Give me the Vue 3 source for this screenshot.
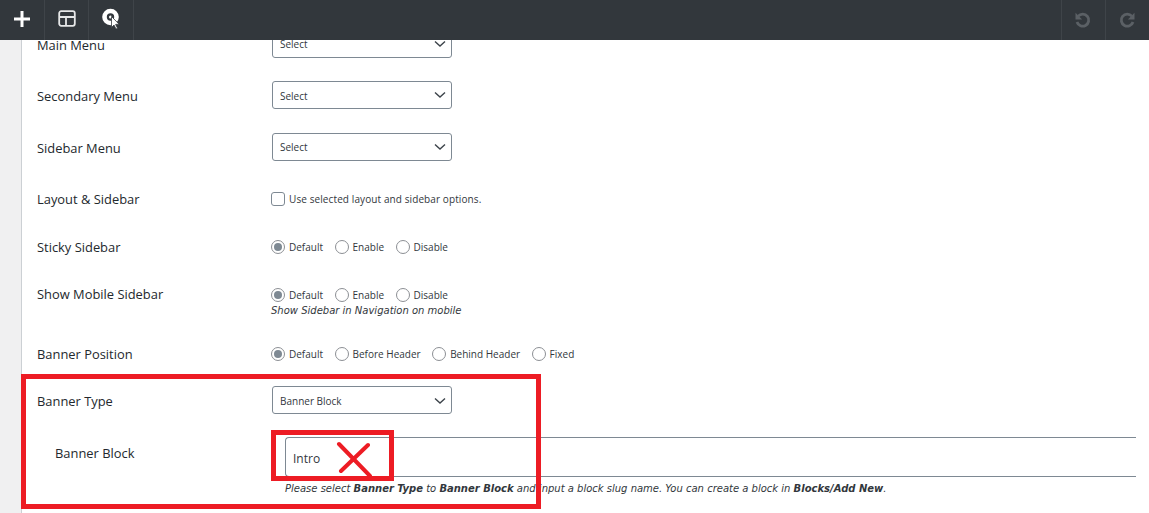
<script setup>
const radios = [
  ['Default', true], ['Enable', false], ['Disable', false]
]
const positions = [
  ['Default', true], ['Before Header', false], ['Behind Header', false], ['Fixed', false]
]
const selects = [
  { label: 'Main Menu', value: 'Select' },
  { label: 'Secondary Menu', value: 'Select' },
  { label: 'Sidebar Menu', value: 'Select' }
]
</script>

<template>
  <div class="page">
    <header class="bar">
      <div class="tools">
        <button class="tool first">
          <svg width="18" height="18" viewBox="0 0 18 18"><path d="M9 1v16M1 9h16" stroke="#fff" stroke-width="3" fill="none"/></svg>
        </button>
        <button class="tool">
          <svg width="20" height="20" viewBox="0 0 20 20"><rect x="2.2" y="2.2" width="15.6" height="14.6" rx="2" stroke="#e6e7e8" stroke-width="1.8" fill="none"/><path d="M2.500 8h15M9 8v8.500" stroke="#e6e7e8" stroke-width="1.800" fill="none"/></svg>
        </button>
        <button class="tool">
          <svg width="20" height="22" viewBox="0 0 20 22"><circle cx="9.500" cy="9" r="6" stroke="#fff" stroke-width="4.600" fill="none"/><circle cx="9.500" cy="9" r="1.500" fill="#fff"/><path d="M10.500 8.500l0 11 2.500-2.400 2 4 1.600-.8-2-3.900 3.500-.2z" fill="#fff" stroke="#32373c" stroke-width=".8"/></svg>
        </button>
      </div>
      <div class="tools right">
        <button class="tool side">
          <svg class="undo" width="18" height="18" viewBox="0 0 18 18"><path d="M5.200 5.200A6 6 0 1 1 4 11" stroke="#5b6065" stroke-width="2.800" fill="none"/><path d="M2.500 1.800v6.600h6.600z" fill="#5b6065"/></svg>
        </button>
        <button class="tool side">
          <svg width="18" height="18" viewBox="0 0 18 18"><path d="M12.800 5.200A6 6 0 1 0 14 11" stroke="#5b6065" stroke-width="2.800" fill="none"/><path d="M15.500 1.800v6.600H8.900z" fill="#5b6065"/></svg>
        </button>
      </div>
    </header>

    <main class="content">
      <form class="form">
        <div v-for="s in selects" :key="s.label" class="row tall">
          <label class="label">{{ s.label }}</label>
          <div class="select raised">
            <span>{{ s.value }}</span>
            <svg class="chev" width="12" height="8" viewBox="0 0 12 8"><path d="M1 1.500l5 4.500 5-4.500" stroke="#3c434a" stroke-width="1.400" fill="none"/></svg>
          </div>
        </div>

        <div class="row tall">
          <label class="label">Layout &amp; Sidebar</label>
          <div class="opts">
            <span class="check"></span>
            <span class="opt-text wide">Use selected layout and sidebar options.</span>
          </div>
        </div>

        <div class="row sticky">
          <label class="label">Sticky Sidebar</label>
          <div class="opts">
            <template v-for="r in radios" :key="r[0]">
              <span class="radio" :class="{ on: r[1] }"></span>
              <span class="opt-text spaced">{{ r[0] }}</span>
            </template>
          </div>
        </div>

        <div class="row mobile">
          <label class="label">Show Mobile Sidebar</label>
          <div class="stack">
            <div class="opts">
              <template v-for="r in radios" :key="r[0]">
                <span class="radio" :class="{ on: r[1] }"></span>
                <span class="opt-text spaced">{{ r[0] }}</span>
              </template>
            </div>
            <p class="hint mobile-hint">Show Sidebar in Navigation on mobile</p>
          </div>
        </div>

        <div class="row position">
          <label class="label">Banner Position</label>
          <div class="opts">
            <template v-for="r in positions" :key="r[0]">
              <span class="radio" :class="{ on: r[1] }"></span>
              <span class="opt-text spaced">{{ r[0] }}</span>
            </template>
          </div>
        </div>

        <div class="row type">
          <label class="label">Banner Type</label>
          <div class="select low-text">
            <span>Banner Block</span>
            <svg class="chev" width="12" height="8" viewBox="0 0 12 8"><path d="M1 1.500l5 4.500 5-4.500" stroke="#3c434a" stroke-width="1.400" fill="none"/></svg>
          </div>
        </div>

        <div class="block">
          <label class="label block-label">Banner Block</label>
          <div class="block-field">
            <div class="input">Intro</div>
            <p class="hint block-hint">Please select <b>Banner Type</b> to <b>Banner Block</b> and input a block slug name. You can create a block in <b>Blocks/Add New</b>.</p>
          </div>
        </div>
      </form>

      <div class="mark frame"></div>
      <div class="mark small-frame"></div>
      <svg class="mark cross" width="40" height="36" viewBox="0 0 40 36"><path d="M4 4l31 32M33 5L6 31" stroke="#ed1c24" stroke-width="4" stroke-linecap="round" fill="none"/></svg>
    </main>
  </div>
</template>

<style>
html, body { margin: 0; background: #fff; }
</style>

<style scoped>
.page {
  width: 1149px;
  height: 513px;
  display: flex;
  flex-direction: column;
  overflow: hidden;
  font-family: "Open Sans", "Noto Sans", sans-serif;
  color: #23282d;
}
.bar {
  height: 40px;
  flex: none;
  display: flex;
  justify-content: space-between;
  background: #32373c;
}
.tools { display: flex; }
.tool {
  width: 44.500px;
  height: 40px;
  padding: 0 0 2px 1px;
  display: flex;
  align-items: center;
  justify-content: center;
  background: none;
  border: 0;
  border-right: 1px solid #3f4449;
}
.tool.side {
  border-right: 0;
  border-left: 1px solid #3f4449;
  width: 44px;
  padding: 0;
}
.undo { margin-left: -3px; }
.content {
  position: relative;
  flex: 1;
  overflow: hidden;
  background: #f0f0f1;
  padding-left: 21px;
}
.form {
  box-sizing: border-box;
  height: 600px;
  margin-top: -21.750px;
  padding-left: 15px;
  background: #fff;
  border-left: 1px solid #ccd0d4;
}
.row {
  display: grid;
  grid-template-columns: 235px 1fr;
  align-items: center;
}
.tall { height: 51.500px; }
.sticky { height: 46px; }
.mobile { height: 59.750px; align-items: start; padding-top: 16.500px; box-sizing: border-box; }
.position { height: 48px; }
.type { height: 44px; }
.label {
  font-size: 12.900px;
  line-height: 18px;
  font-weight: 400;
  padding-top: 1px;
}
.sticky .label { padding-top: 0; }
.mobile .label { padding-top: 0; margin-top: -2px; }
.position .label { padding-top: 0; }
.select {
  box-sizing: border-box;
  width: 180px;
  height: 28px;
  display: flex;
  align-items: center;
  justify-content: space-between;
  padding: 0 5px 0 7px;
  background: #fff;
  border: 1px solid #7e8993;
  border-radius: 3px;
  font-size: 10px;
  color: #32373c;
}
.select.raised { margin-top: -1px; padding-top: 1px; }
.select.low-text { padding-top: 2px; }
.chev { flex: none; margin-top: -1px; }
.opts {
  display: flex;
  align-items: center;
  height: 16px;
}
.check {
  box-sizing: border-box;
  width: 14px;
  height: 14px;
  margin-left: -1px;
  margin-right: 4px;
  background: #fff;
  border: 1px solid #7e8993;
  border-radius: 3px;
}
.radio {
  box-sizing: border-box;
  width: 14px;
  height: 14px;
  margin-left: -1px;
  margin-right: 4px;
  flex: none;
  border: 1px solid #8c8f94;
  border-radius: 50%;
  background: #fff;
  position: relative;
}
.radio.on::after {
  content: "";
  position: absolute;
  left: 2px;
  top: 2px;
  width: 8px;
  height: 8px;
  border-radius: 50%;
  background: #7e8993;
}
.opt-text {
  font-size: 10px;
  line-height: 14px;
  color: #32373c;
}
.wide { letter-spacing: .1px; }
.spaced { margin-right: 12.500px; }
.stack { display: flex; flex-direction: column; }
.hint {
  margin: 0;
  font-family: "DejaVu Sans", sans-serif;
  font-style: italic;
  font-size: 10px;
  color: #32373c;
}
.hint b { font-weight: 700; }
.mobile-hint { margin-top: 1.500px; margin-left: -1px; line-height: 13px; }
.block {
  display: grid;
  grid-template-columns: 248px 1fr;
  padding-top: 15px;
  padding-left: 18px;
  margin-left: -18px;
}
.label.block-label { padding-left: 18px; padding-top: 0; margin-top: 7px; }
.block-field { margin-right: 13px; }
.input {
  box-sizing: border-box;
  height: 40px;
  padding: 13px 0 0 7px;
  background: #fff;
  border: 1px solid #7e8993;
  border-right: 0;
  border-radius: 4px 0 0 4px;
  font-size: 12px;
  line-height: 16px;
  color: #32373c;
}
.block-hint { margin-top: 5px; line-height: 13px; }
.mark { position: absolute; }
.frame {
  left: 21px;
  top: 334px;
  width: 520px;
  height: 135px;
  box-sizing: border-box;
  border: 5px solid #ed1c24;
}
.small-frame {
  left: 271px;
  top: 390px;
  width: 123px;
  height: 51px;
  box-sizing: border-box;
  border: 5px solid #ed1c24;
}
.cross { left: 335px; top: 400px; }
</style>
